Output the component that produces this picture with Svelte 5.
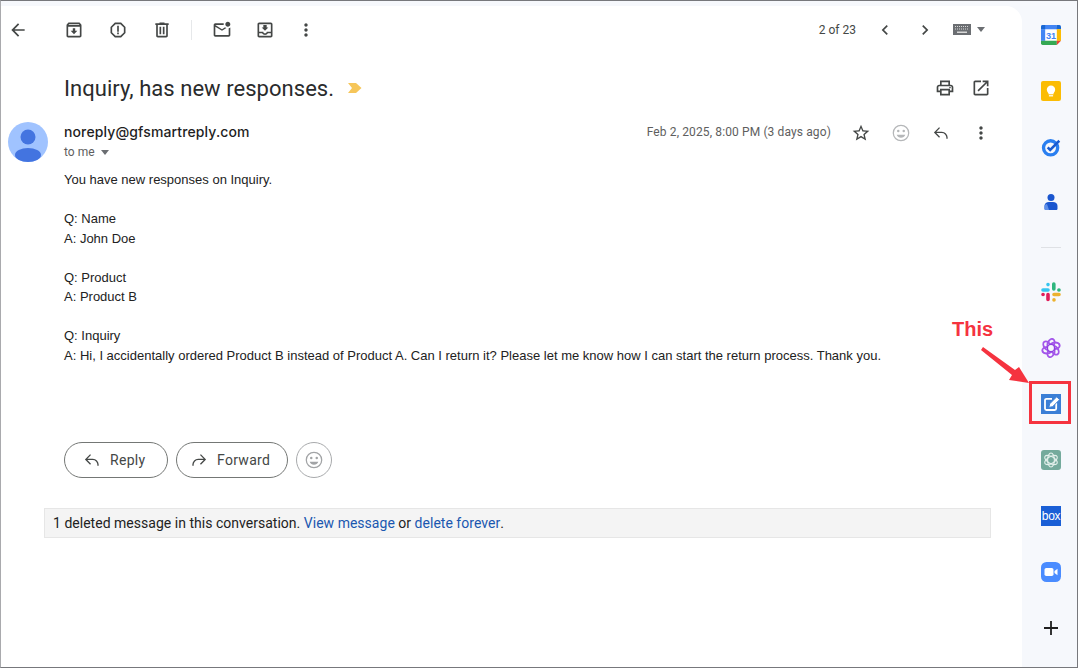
<script>
	const icons = {
		back: 'M20 11H7.83l5.59-5.59L12 4l-8 8 8 8 1.41-1.41L7.83 13H20v-2z',
		archive: 'M20.54 5.23l-1.39-1.68C18.88 3.21 18.47 3 18 3H6c-.47 0-.88.21-1.16.55L3.46 5.23C3.17 5.57 3 6.02 3 6.5V19c0 1.1.9 2 2 2h14c1.1 0 2-.9 2-2V6.5c0-.48-.17-.93-.46-1.27zM6.24 5h11.52l.83 1H5.42l.82-1zM5 19V8h14v11H5zm8.45-9h-2.9v3H8l4 4 4-4h-2.55z',
		spam: 'M15.73 3H8.27L3 8.27v7.46L8.27 21h7.46L21 15.73V8.27L15.73 3zM19 14.9L14.9 19H9.1L5 14.9V9.1L9.1 5h5.8L19 9.1v5.8zM11 7h2v7h-2zM11 15h2v2h-2z',
		trash: 'M15 4V3H9v1H4v2h1v13c0 1.1.9 2 2 2h10c1.1 0 2-.9 2-2V6h1V4h-5zm2 15H7V6h10v13zM9 8h2v9H9zM13 8h2v9h-2z',
		unread: 'M22 8.98V18c0 1.1-.9 2-2 2H4c-1.1 0-2-.9-2-2V6c0-1.1.9-2 2-2h10.1c-.06.32-.1.66-.1 1s.04.68.1 1H4l8 5 3.67-2.29c.47.43 1.02.76 1.63.98L12 13 4 8v10h16V9.9c.74-.15 1.42-.48 2-.92zM16 5c0 1.66 1.34 3 3 3s3-1.34 3-3-1.34-3-3-3-3 1.34-3 3z',
		move: 'M19 3H5c-1.1 0-2 .9-2 2v14c0 1.1.9 2 2 2h14c1.1 0 2-.9 2-2V5c0-1.1-.9-2-2-2zm0 16H5v-3h3.56c.69 1.19 1.97 2 3.45 2s2.75-.81 3.45-2H19v3zm0-5h-4.99c0 1.1-.9 2-2 2s-2-.9-2-2H5V5h14v9zm-3-5h-2V6h-4v3H8l4 4 4-4z',
		more: 'M12 8c1.1 0 2-.9 2-2s-.9-2-2-2-2 .9-2 2 .9 2 2 2zm0 2c-1.1 0-2 .9-2 2s.9 2 2 2 2-.9 2-2-.9-2-2-2zm0 6c-1.1 0-2 .9-2 2s.9 2 2 2 2-.9 2-2-.9-2-2-2z',
		prev: 'M15.41 7.41 14 6l-6 6 6 6 1.41-1.41L10.83 12z',
		next: 'M8.59 16.59 10 18l6-6-6-6-1.41 1.41L13.17 12z',
		print: 'M19 8h-1V3H6v5H5c-1.66 0-3 1.34-3 3v6h4v4h12v-4h4v-6c0-1.66-1.34-3-3-3zM8 5h8v3H8V5zm8 14H8v-4h8v4zm4-4h-2v-2H6v2H4v-4c0-.55.45-1 1-1h14c.55 0 1 .45 1 1v4zM18 10.5a1 1 0 1 0 0 2 1 1 0 0 0 0-2z',
		open: 'M19 19H5V5h7V3H5c-1.11 0-2 .9-2 2v14c0 1.1.89 2 2 2h14c1.1 0 2-.9 2-2v-7h-2v7zM14 3v2h3.59l-9.83 9.83 1.41 1.41L19 6.41V10h2V3h-7z',
		star: 'M22 9.24l-7.19-.62L12 2 9.19 8.63 2 9.24l5.46 4.73L5.82 21 12 17.27 18.18 21l-1.63-7.03L22 9.24zM12 15.4l-3.76 2.27 1-4.28-3.32-2.88 4.38-.38L12 6.1l1.71 4.04 4.38.38-3.32 2.88 1 4.28L12 15.4z',
		reply: 'M20 19h-1.600v-1.500a5.400 5.400 0 0 0-5.400-5.400H6.400l4.400 4.400-1.100 1.100L3.500 11.300 9.700 5l1.100 1.100-4.400 4.400H13a7 7 0 0 1 7 7z',
		forward: 'M4 19h1.600v-1.500a5.400 5.400 0 0 1 5.400-5.400h6.600l-4.400 4.400 1.100 1.100 6.200-6.300L14.300 5l-1.100 1.100 4.400 4.400H11a7 7 0 0 0-7 7z',
		smile: 'M12 2a10 10 0 1 0 0 20 10 10 0 0 0 0-20zm0 18.500a8.500 8.500 0 1 1 0-17 8.500 8.500 0 0 1 0 17zM8.700 8.200a1.500 1.500 0 1 0 0 3 1.500 1.500 0 0 0 0-3zm6.600 0a1.500 1.500 0 1 0 0 3 1.500 1.500 0 0 0 0-3zM12 17.600c2.400 0 4.400-1.500 5.200-3.600H6.800c.8 2.100 2.800 3.600 5.200 3.600z'
	};

	const lines = [
		['You have new responses on Inquiry.'],
		['Q: Name', 'A: John Doe'],
		['Q: Product', 'A: Product B'],
		['Q: Inquiry', 'A: Hi, I accidentally ordered Product B instead of Product A. Can I return it? Please let me know how I can start the return process. Thank you.']
	];
</script>

{#snippet icon(name, size = 20)}
	<svg width={size} height={size} viewBox="0 0 24 24" fill="currentColor"><path d={icons[name]} /></svg>
{/snippet}

<div class="window">
	<main class="card">
		<div class="toolbar">
			<span class="btn back">{@render icon('back')}</span>
			<span class="btn wide first">{@render icon('archive')}</span>
			<span class="btn wide">{@render icon('spam')}</span>
			<span class="btn wide">{@render icon('trash')}</span>
			<span class="sep"></span>
			<span class="btn wide">{@render icon('unread')}</span>
			<span class="btn mid">{@render icon('move')}</span>
			<span class="btn slim">{@render icon('more')}</span>
			<span class="count">2 of 23</span>
			<span class="btn nav">{@render icon('prev')}</span>
			<span class="btn nav">{@render icon('next')}</span>
			<svg class="kbd" width="18" height="11" viewBox="0 0 18 11">
				<rect width="18" height="11" fill="#6b6e72" />
				<path d="M2 2.500h14M2 5h14" stroke="#d8d8d8" stroke-width="1" stroke-dasharray="1 1" />
				<rect x="4" y="7.500" width="10" height="1.500" fill="#d8d8d8" />
			</svg>
			<span class="caret"></span>
		</div>

		<div class="subject">
			<h1>Inquiry, has new responses.</h1>
			<svg class="label" width="14" height="10" viewBox="0 0 14 10"><path d="M0 0h8l5.500 5L8 10H0l4-5z" fill="#f6c65a" /></svg>
			<span class="btn subject-action print">{@render icon('print')}</span>
			<span class="btn subject-action">{@render icon('open')}</span>
		</div>

		<div class="message">
			<svg class="avatar" width="40" height="40" viewBox="0 0 40 40">
				<circle cx="20" cy="20" r="20" fill="#a0c3ff" />
				<circle cx="20" cy="15" r="7.500" fill="#4374e0" />
				<ellipse cx="20" cy="33" rx="13" ry="7" fill="#4374e0" />
			</svg>
			<div class="content">
				<div class="head">
					<div class="who">
						<div class="sender">noreply@gfsmartreply.com</div>
						<div class="to">to me <span class="caret small"></span></div>
					</div>
					<span class="date">Feb 2, 2025, 8:00 PM (3 days ago)</span>
					<span class="btn act star">{@render icon('star')}</span>
					<span class="btn act faint">{@render icon('smile')}</span>
					<span class="btn act">{@render icon('reply')}</span>
					<span class="btn act">{@render icon('more')}</span>
				</div>
				<div class="body">
					{#each lines as block}
						<p>
							{#each block as line}
								<span>{line}</span>
							{/each}
						</p>
					{/each}
				</div>
				<div class="actions">
					<span class="pill reply">{@render icon('reply')}Reply</span>
					<span class="pill forward">{@render icon('forward')}Forward</span>
					<span class="pill round">{@render icon('smile')}</span>
				</div>
			</div>
		</div>

		<div class="deleted">
			1 deleted message in this conversation.&nbsp;<a href="#view">View message</a>&nbsp;or&nbsp;<a href="#delete">delete forever</a>.
		</div>
	</main>

	<aside class="rail">
		<div class="slot">
			<svg width="20" height="20" viewBox="0 0 24 24">
				<rect x="5" y="5" width="14" height="14" fill="#fff" />
				<path d="M18.500 0H2a2 2 0 0 0-2 2v3h19z" fill="#4285f4" />
				<path d="M5 0v5H0V2a2 2 0 0 1 2-2z" fill="#1967d2" />
				<path d="M18.500 0v5H24V2a2 2 0 0 0-2-2z" fill="#1967d2" />
				<rect y="5" width="5" height="14" fill="#4285f4" />
				<rect x="19" y="5" width="5" height="14" fill="#fbbc04" />
				<path d="M0 19v3a2 2 0 0 0 2 2h17v-5z" fill="#34a853" />
				<path d="M19 24v-5h5z" fill="#ea4335" />
				<text x="12" y="16.500" class="cal">31</text>
			</svg>
		</div>
		<div class="slot">
			<svg width="20" height="20" viewBox="0 0 24 24">
				<rect width="24" height="24" rx="2.500" fill="#fbbc04" />
				<circle cx="12" cy="10.500" r="5" fill="#fff" />
				<rect x="9" y="13" width="6" height="3" fill="#fff" />
				<rect x="9.500" y="17" width="5" height="1.500" fill="#fff" />
			</svg>
		</div>
		<div class="slot">
			<svg width="20" height="20" viewBox="0 0 24 24">
				<circle cx="11.500" cy="13" r="8.500" fill="none" stroke="#2a7ff0" stroke-width="4" />
				<path d="M8 12.500l3 3L22 4.500" fill="none" stroke="#1a5bd0" stroke-width="3" />
			</svg>
		</div>
		<div class="slot">
			<svg width="24" height="24" viewBox="0 0 24 24">
				<circle cx="12" cy="6.500" r="3.500" fill="#1a56cf" />
				<path d="M10 11h4c2.500 0 4.500 1.500 4.500 4v2.500c0 1-.7 1.500-1.500 1.500H7c-.8 0-1.500-.5-1.500-1.500V15c0-2.500 2-4 4.500-4z" fill="#1a56cf" />
				<path d="M8 13c-1.500.4-2.500 1-2.500 2v2.500c0 1 .7 1.500 1.500 1.500h3z" fill="#5f8fe8" />
			</svg>
		</div>
		<div class="rule"></div>
		<div class="slot">
			<svg width="20" height="20" viewBox="0 0 20 20" fill="none" stroke-width="3.600" stroke-linecap="round">
				<path d="M2 8h5M7 2.500v.1" stroke="#36c5f0" />
				<path d="M12.800 2v5M18 8h-.1" stroke="#2eb67d" />
				<path d="M18 12.500h-5M13 18v-.1" stroke="#ecb22e" />
				<path d="M7 12.500v5M2 12.500h.1" stroke="#e01e5a" />
			</svg>
		</div>
		<div class="slot">
			<svg width="20" height="20" viewBox="0 0 20 20" fill="none" stroke="#a356ea" stroke-width="1.900">
				{#each [0, 60, 120, 180, 240, 300] as turn}
					<ellipse cx="10" cy="5.500" rx="3.200" ry="4.800" transform="rotate({turn} 10 10) rotate(25 10 5.500)" />
				{/each}
				<circle cx="10" cy="10" r="3.600" fill="#f6f8fc" stroke="#8f3fe0" stroke-width="1.400" />
			</svg>
		</div>
		<div class="slot">
			<svg width="20" height="20" viewBox="0 0 20 20">
				<rect width="20" height="20" fill="#3b7fd6" />
				<path d="M11 4.800H5.500A1.500 1.500 0 0 0 4 6.300v8.200A1.500 1.500 0 0 0 5.500 16h8.200a1.500 1.500 0 0 0 1.500-1.500V9" fill="none" stroke="#fff" stroke-width="1.800" />
				<path d="M7.800 13.400l.9-3.600 7-7 2.900 2.900-7 7z" fill="#fff" stroke="#3b7fd6" stroke-width="1" />
			</svg>
		</div>
		<div class="slot">
			<svg width="20" height="20" viewBox="0 0 20 20">
				<rect width="20" height="20" rx="3" fill="#74aa9c" />
				<g fill="none" stroke="#e4f0ec" stroke-width="1.100">
					<ellipse cx="10" cy="10" rx="3.400" ry="7" />
					<ellipse cx="10" cy="10" rx="3.400" ry="7" transform="rotate(60 10 10)" />
					<ellipse cx="10" cy="10" rx="3.400" ry="7" transform="rotate(120 10 10)" />
				</g>
			</svg>
		</div>
		<div class="slot">
			<span class="box">box</span>
		</div>
		<div class="slot">
			<svg width="20" height="20" viewBox="0 0 20 20">
				<rect width="20" height="20" rx="5.500" fill="#4a8cff" />
				<rect x="3.500" y="6" width="9" height="8" rx="1.800" fill="#fff" />
				<path d="M13.500 9l3-2.300v6.600l-3-2.300z" fill="#fff" />
			</svg>
		</div>
		<div class="slot">
			<svg width="14" height="14" viewBox="0 0 14 14"><path d="M7 0v14M0 7h14" stroke="#1f1f1f" stroke-width="1.800" /></svg>
		</div>
	</aside>

	<div class="note">This</div>
	<svg class="arrow" width="60" height="50" viewBox="0 0 60 50">
		<path d="M3 2l32 23 4-3 10 16-20-3 3-5L1 5z" fill="#f5333f" />
	</svg>
	<div class="marker"></div>
</div>

<style>
	:global(body) {
		margin: 0;
		background: #fff;
	}
	.window {
		position: relative;
		box-sizing: border-box;
		width: 1078px;
		height: 668px;
		display: flex;
		padding-top: 5px;
		background: #f6f8fc;
		border: 1px solid #77787c;
		border-left-color: #a9aaad;
		font-family: Roboto, 'Liberation Sans', sans-serif;
		color: #444746;
		overflow: hidden;
	}
	.card {
		width: 1021px;
		flex: none;
		background: #fff;
		border-radius: 0 16px 0 0;
	}
	.btn {
		display: flex;
		align-items: center;
		justify-content: center;
		flex: none;
	}
	.toolbar {
		display: flex;
		align-items: center;
		height: 47px;
	}
	.back {
		width: 34px;
		margin-right: 17px;
	}
	.wide {
		width: 44px;
	}
	.mid {
		width: 42px;
	}
	.slim {
		width: 40px;
	}
	.sep {
		width: 1px;
		height: 20px;
		background: #e6e8ea;
		margin: 0 8px 0 7px;
	}
	.count {
		margin-left: auto;
		margin-right: 9px;
		font-size: 12px;
		color: #444746;
	}
	.nav {
		width: 40px;
	}
	.kbd {
		margin-left: 8px;
	}
	.caret {
		width: 0;
		height: 0;
		margin: 0 37px 0 6px;
		border: 4px solid transparent;
		border-top: 5px solid #6b6e72;
		border-bottom: 0;
	}
	.caret.small {
		display: inline-block;
		margin: 0 0 1px 3px;
	}
	.subject {
		display: flex;
		align-items: center;
		height: 36px;
		margin-top: 17px;
		padding-left: 63px;
	}
	h1 {
		margin: 0;
		font-size: 22px;
		font-weight: 400;
		letter-spacing: 0.04px;
		color: #2a2b2c;
	}
	.label {
		margin-left: 14px;
	}
	.subject-action {
		width: 36px;
		color: #444746;
	}
	.print {
		margin-left: auto;
	}
	.subject-action:last-child {
		margin-right: 23px;
	}
	.message {
		display: flex;
		margin-top: 16px;
		padding-left: 7px;
	}
	.avatar {
		flex: none;
		margin-right: 16px;
	}
	.content {
		flex: 1;
		padding-right: 21px;
	}
	.head {
		display: flex;
		align-items: flex-start;
		height: 40px;
	}
	.who {
		flex: 1;
	}
	.sender {
		font-family: Inter, Roboto, sans-serif;
		font-size: 14px;
		font-weight: 500;
		line-height: 20px;
		letter-spacing: 0.12px;
		color: #1f1f1f;
	}
	.to {
		font-size: 12px;
		line-height: 20px;
		color: #5e5e5e;
	}
	.date {
		margin-right: 10px;
		font-size: 12px;
		line-height: 20px;
		letter-spacing: 0.12px;
		color: #5e5e5e;
	}
	.act {
		width: 40px;
		height: 20px;
		margin-top: 1px;
		color: #444746;
	}
	.star {
		color: #444746;
	}
	.faint {
		color: #b5b7b9;
	}
	.body {
		font-family: 'Liberation Sans', Arial, sans-serif;
		font-size: 13px;
		line-height: 19.5px;
		color: #222;
		margin-top: 8px;
	}
	.body p {
		margin: 0 0 19.5px;
	}
	.body span {
		display: block;
	}
	.actions {
		display: flex;
		gap: 8px;
		margin-top: 77px;
	}
	.pill {
		box-sizing: border-box;
		height: 36px;
		display: flex;
		align-items: center;
		gap: 8px;
		border: 1px solid #747775;
		border-radius: 18px;
		font-size: 14px;
		letter-spacing: 0.3px;
		color: #444746;
	}
	.reply {
		width: 104px;
		padding-left: 17px;
	}
	.forward {
		width: 112px;
		padding-left: 12px;
	}
	.round {
		width: 36px;
		justify-content: center;
		border-color: #a8aaac;
		color: #a2a4a6;
	}
	.deleted {
		box-sizing: border-box;
		display: flex;
		align-items: center;
		width: 947px;
		height: 30px;
		margin: 30px 0 0 43px;
		padding-left: 8px;
		background: #f4f4f4;
		border: 1px solid #e6e6e6;
		font-size: 14px;
		letter-spacing: 0.02px;
		color: #222;
	}
	.deleted a {
		color: #1a57b0;
		text-decoration: none;
	}
	.rail {
		flex: 1;
		padding: 0.5px 0 0 3px;
	}
	.slot {
		display: flex;
		align-items: center;
		justify-content: center;
		height: 56px;
	}
	.rule {
		width: 20px;
		height: 1px;
		margin: 16px auto;
		background: #dfe1e5;
	}
	.cal {
		font-family: 'Liberation Sans', sans-serif;
		font-size: 11px;
		font-weight: 700;
		text-anchor: middle;
		fill: #4285f4;
	}
	.box {
		display: flex;
		align-items: center;
		justify-content: center;
		width: 20px;
		height: 20px;
		background: #1a5fd6;
		color: #fff;
		font-family: 'Liberation Sans', sans-serif;
		font-size: 12px;
		letter-spacing: -0.3px;
	}
	.note {
		position: absolute;
		left: 951px;
		top: 317px;
		font-family: 'Liberation Sans', sans-serif;
		font-size: 20px;
		font-weight: 700;
		color: #f5333f;
	}
	.arrow {
		position: absolute;
		left: 979px;
		top: 344px;
	}
	.marker {
		position: absolute;
		left: 1028px;
		top: 380px;
		width: 36px;
		height: 37px;
		border: 3px solid #f5333f;
	}
</style>
